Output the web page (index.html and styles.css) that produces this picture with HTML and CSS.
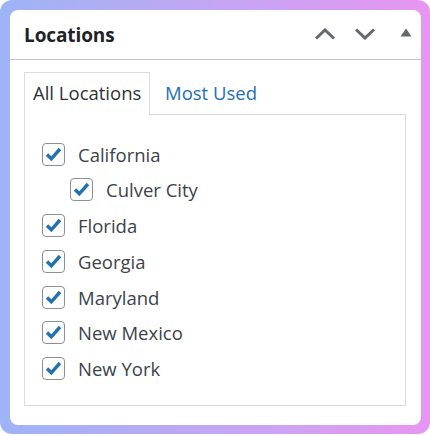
FILE: index.html
```html
<!DOCTYPE html>
<html>
<head>
<meta charset="utf-8">
<link rel="stylesheet" href="styles.css">
</head>
<body>
<div class="frame">
  <div class="card">
    <div class="header">
      <h2 class="title">Locations</h2>
      <div class="actions">
        <svg class="icon chev" width="22" height="12" viewBox="0 0 22 12"><path d="M2 10.5 L11 2 L20 10.5" fill="none" stroke="#646970" stroke-width="3"/></svg>
        <svg class="icon chev" width="22" height="12" viewBox="0 0 22 12"><path d="M2 1.5 L11 10 L20 1.5" fill="none" stroke="#646970" stroke-width="3"/></svg>
        <svg class="icon tri" width="12" height="9" viewBox="0 0 12 9"><path d="M0.5 8.5 L6 0.5 L11.5 8.5 Z" fill="#646970"/></svg>
      </div>
    </div>
    <div class="body">
      <div class="tabs">
        <div class="tab active">All Locations</div>
        <div class="tab link">Most Used</div>
      </div>
      <div class="panel">
        <ul class="list">
          <li class="item"><span class="cb"><svg width="17" height="15" viewBox="0 0 17 15"><path d="M2 7.5 L6.3 11.8 L15 2" fill="none" stroke="#2271b1" stroke-width="3.4"/></svg></span>California</li>
          <li class="item child"><span class="cb"><svg width="17" height="15" viewBox="0 0 17 15"><path d="M2 7.5 L6.3 11.8 L15 2" fill="none" stroke="#2271b1" stroke-width="3.4"/></svg></span>Culver City</li>
          <li class="item"><span class="cb"><svg width="17" height="15" viewBox="0 0 17 15"><path d="M2 7.5 L6.3 11.8 L15 2" fill="none" stroke="#2271b1" stroke-width="3.4"/></svg></span>Florida</li>
          <li class="item"><span class="cb"><svg width="17" height="15" viewBox="0 0 17 15"><path d="M2 7.5 L6.3 11.8 L15 2" fill="none" stroke="#2271b1" stroke-width="3.4"/></svg></span>Georgia</li>
          <li class="item"><span class="cb"><svg width="17" height="15" viewBox="0 0 17 15"><path d="M2 7.5 L6.3 11.8 L15 2" fill="none" stroke="#2271b1" stroke-width="3.4"/></svg></span>Maryland</li>
          <li class="item"><span class="cb"><svg width="17" height="15" viewBox="0 0 17 15"><path d="M2 7.5 L6.3 11.8 L15 2" fill="none" stroke="#2271b1" stroke-width="3.4"/></svg></span>New Mexico</li>
          <li class="item"><span class="cb"><svg width="17" height="15" viewBox="0 0 17 15"><path d="M2 7.5 L6.3 11.8 L15 2" fill="none" stroke="#2271b1" stroke-width="3.4"/></svg></span>New York</li>
        </ul>
      </div>
    </div>
  </div>
</div>
</body>
</html>
```
FILE: styles.css
```css
html, body {
  margin: 0;
  padding: 0;
  background: #ffffff;
}
body {
  font-family: "Open Sans", "Noto Sans", sans-serif;
  color: #2c3338;
}
.frame {
  width: 430px;
  height: 434px;
  box-sizing: border-box;
  padding: 10px 9px 9px 10px;
  border-radius: 12px;
  background: linear-gradient(90deg, #9db4f6 0%, #c3a6f4 50%, #e796f2 100%);
}
.card {
  height: 100%;
  box-sizing: border-box;
  background: #ffffff;
  border-radius: 8px;
  display: flex;
  flex-direction: column;
}
.header {
  height: 50px;
  box-sizing: border-box;
  border-bottom: 1px solid #c3c4c7;
  display: flex;
  align-items: center;
  justify-content: space-between;
  padding: 0 9px 0 14px;
}
.title {
  margin: 0;
  font-size: 19px;
  font-weight: 700;
  color: #1d2327;
  letter-spacing: -0.1px;
}
.actions {
  display: flex;
  align-items: center;
  gap: 18px;
  padding-bottom: 2px;
}
.tri {
  margin-left: 6px;
  margin-bottom: 3px;
}
.body {
  padding: 12px 15px 19px 14px;
  flex: 1;
  display: flex;
  flex-direction: column;
}
.tabs {
  display: flex;
  align-items: flex-end;
  height: 42px;
  position: relative;
  z-index: 1;
}
.tab {
  font-size: 18.5px;
  height: 42px;
  box-sizing: border-box;
  display: flex;
  align-items: center;
}
.tab.active {
  width: 126px;
  padding-left: 8px;
  padding-bottom: 4px;
  border: 1px solid #dcdcde;
  border-bottom: none;
  background: #ffffff;
  color: #2c3338;
  height: 43px;
  margin-bottom: -1px;
}
.tab.link {
  color: #2271b1;
  padding-left: 15px;
  padding-bottom: 1px;
}
.panel {
  flex: 1;
  border: 1px solid #dcdcde;
  padding: 28px 0 0 17px;
}
.list {
  list-style: none;
  margin: 0;
  padding: 0;
  display: flex;
  flex-direction: column;
  gap: 13.8px;
}
.item {
  display: flex;
  align-items: center;
  font-size: 18.5px;
  height: 22px;
  color: #3c434a;
}
.item.child {
  padding-left: 28px;
}
.cb {
  width: 23px;
  height: 23px;
  box-sizing: border-box;
  border: 1.7px solid #8c8f94;
  border-radius: 4px;
  display: flex;
  align-items: center;
  justify-content: center;
  margin-right: 13px;
  flex-shrink: 0;
}
```
